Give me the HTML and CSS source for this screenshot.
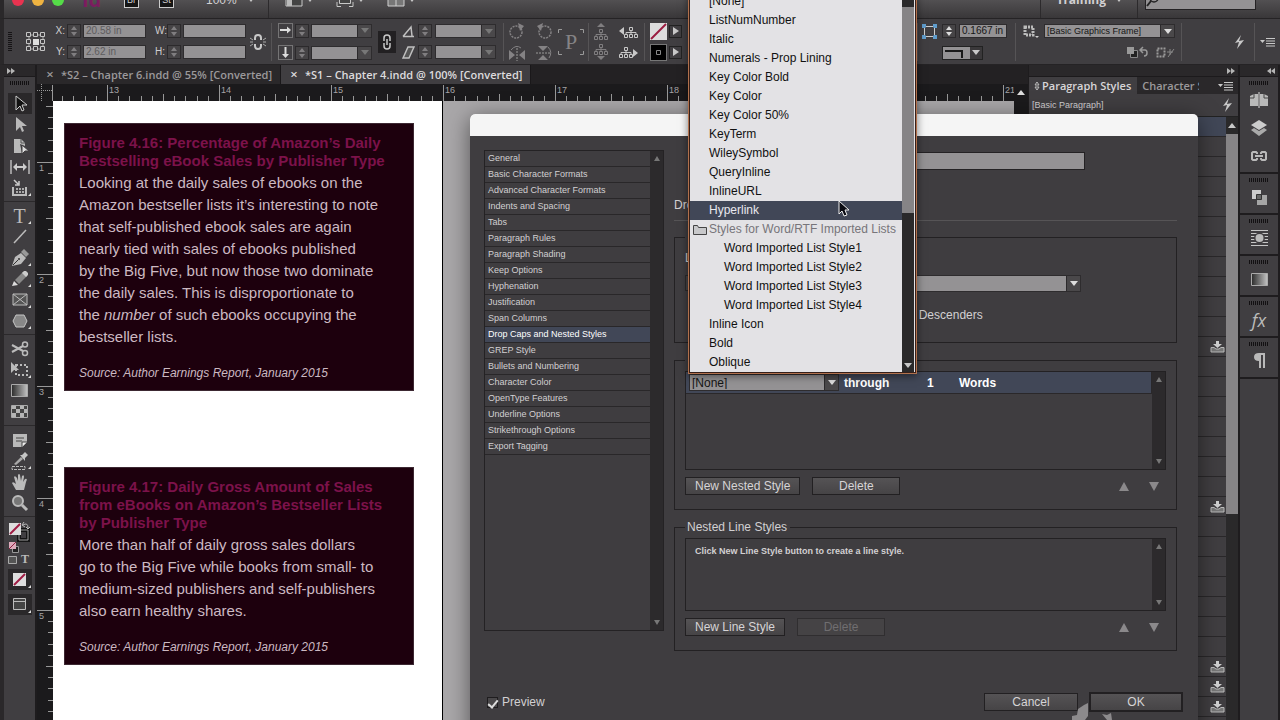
FILE: index.html
```html
<!DOCTYPE html>
<html lang="en">
<head>
<meta charset="utf-8">
<title>S1 - Chapter 4.indd</title>
<link rel="stylesheet" href="styles.css">
</head>
<body>
<svg class="defs" aria-hidden="true">
  <defs>
    <linearGradient id="fade"><stop offset="0" stop-color="#2a2a2a"/><stop offset="1" stop-color="#c4c4c4"/></linearGradient>
    <pattern id="ticks-h" width="112" height="17" patternUnits="userSpaceOnUse" x="54">
      <path d="M.5 1v16M11.5 12v5M22.5 12v5M34.5 12v5M45.5 12v5M56.5 10v7M67.5 12v5M78.5 12v5M90.5 12v5M101.5 12v5" stroke="#989898"/>
    </pattern>
    <pattern id="ticks-v" width="16" height="112" patternUnits="userSpaceOnUse" y="61">
      <path d="M0 .5h16M11 11.5h5M11 22.5h5M11 34.5h5M11 45.5h5M9 56.5h7M11 67.5h5M11 78.5h5M11 90.5h5M11 101.5h5" stroke="#989898"/>
    </pattern>
    <symbol id="bolt" viewBox="0 0 12 16"><path d="M8 1 2 9l4-1-2 7 7-9-5 1z" fill="#c8c8c8"/></symbol>
    <symbol id="flyout" viewBox="0 0 16 10"><path d="M0 3h5L2.500 6z" fill="#c8c8c8"/><path d="M6 1.500h9M6 4h9M6 6.500h9M6 9h9" stroke="#c8c8c8"/></symbol>
    <symbol id="tree" viewBox="0 0 14 12"><path d="M5.500 1.500h3v3h-3zM.5 8.500h3v3h-3zM5.500 8.500h3v3h-3zM10.500 8.500h3v3h-3zM7 5v3M2 8V6.500h10V8" fill="none" stroke="currentColor"/></symbol>
    <symbol id="load" viewBox="0 0 15 12"><path d="M1 6.500h3L6 8h3l2-1.500h3V11H1z" fill="#777" stroke="#bbb"/><path d="M6 0h3v3h3L7.500 7 3 3h3z" fill="#d0d0d0"/></symbol>
    <symbol id="arrows-right" viewBox="0 0 8 6"><path d="M0 0l4 3-4 3zM4 0l4 3-4 3z" fill="#b5b5b5"/></symbol>
    <symbol id="arrows-left" viewBox="0 0 8 6"><path d="M8 0 4 3l4 3zM4 0 0 3l4 3z" fill="#b5b5b5"/></symbol>
  </defs>
</svg>

<div class="app">
  <header class="appbar">
    <span class="light red"></span><span class="light amber"></span><span class="light green"></span>
    <span class="logo">Id</span>
    <button class="square">Br</button><button class="square">St</button>
    <button class="zoom">100%<i class="tri down"></i></button>
    <i class="bar-line"></i>
    <button class="view"><svg width="18" height="14"><path d="M1 1h16v12H1z" fill="#444" stroke="#c8c8c8"/><path d="M2 2h5v11H2z" fill="#bbb"/></svg><i class="tri down"></i></button>
    <button class="view"><svg width="18" height="14"><path d="M3.500 1v9.500h11V1M1 9v4.500h4M17 9v4.500h-4" fill="#444" stroke="#c8c8c8"/></svg><i class="tri down"></i></button>
    <button class="view"><svg width="18" height="14"><path d="M1 1h16v12H1zM9 1v12" fill="#777" stroke="#d0d0d0"/></svg><i class="tri down"></i></button>
    <div class="appbar-end">
      <i class="bar-line"></i>
      <button class="training">Training<i class="tri down"></i></button>
      <i class="bar-line"></i>
      <label class="search"><svg width="14" height="14"><circle cx="8" cy="5" r="4" fill="none" stroke="#222" stroke-width="1.500"/><path d="M5 8l-4 5" stroke="#222" stroke-width="2"/></svg><input aria-label="Search"></label>
    </div>
  </header>

  <div class="control">
    <i class="grip-v"></i>
    <svg class="ref" width="20" height="20"><path d="M3 3h14v14H3z" fill="none" stroke="#aaa"/><g fill="#403e41" stroke="#c5c5c5"><path d="M.5.5h4v4h-4zM7.500.5h4v4h-4zM14.500.5h4v4h-4zM.5 7.500h4v4h-4zM14.500 7.500h4v4h-4zM.5 14.500h4v4h-4zM7.500 14.500h4v4h-4zM14.500 14.500h4v4h-4z"/></g><path d="M7 7h6v6H7z" fill="#ddd"/></svg>
    <div class="fields xy">
      <label for="fx">X:</label><i class="spin"></i><input id="fx" value="20.58 in">
      <label for="fy">Y:</label><i class="spin"></i><input id="fy" value="2.62 in">
    </div>
    <div class="fields wh">
      <label for="fw">W:</label><i class="spin"></i><input id="fw">
      <label for="fh">H:</label><i class="spin"></i><input id="fh">
    </div>
    <svg class="unlink" width="16" height="18"><path d="M5 7V5q0-3 3-3t3 3v2M5 11v2q0 3 3 3t3-3v-2" fill="none" stroke="#c8c8c8" stroke-width="2"/><path d="M0 5l3 2M0 9h3M0 13l3-2M16 5l-3 2M16 9h-3M16 13l-3-2" stroke="#aaa"/></svg>
    <i class="line"></i>
    <div class="fields scale">
      <svg width="15" height="15"><path d="M.5.5h14v14H.5z" fill="none" stroke="#aaa" stroke-dasharray="1 1"/><path d="M2 7h8" stroke="#ddd" stroke-width="2"/><path d="M9 3.500 13 7l-4 3.500z" fill="#ddd"/></svg><i class="spin"></i><span class="combo dim"><input aria-label="Scale X"><i class="tri down"></i></span>
      <svg width="15" height="15"><path d="M.5.5h14v14H.5z" fill="none" stroke="#aaa" stroke-dasharray="1 1"/><path d="M7.500 2v8" stroke="#ddd" stroke-width="2"/><path d="M4 9h7l-3.500 4z" fill="#ddd"/></svg><i class="spin"></i><span class="combo dim"><input aria-label="Scale Y"><i class="tri down"></i></span>
    </div>
    <button class="chain" aria-label="Constrain"><svg width="10" height="16"><path d="M2 7V4q0-3 3-3t3 3v3M2 9v3q0 3 3 3t3-3V9" fill="none" stroke="#c8c8c8" stroke-width="1.500"/><path d="M5 5v6" stroke="#c8c8c8" stroke-width="1.500"/></svg></button>
    <div class="fields angle">
      <svg width="13" height="13"><path d="M1 11.500h11M1 11.500 9 2l1 9" fill="none" stroke="#c0c0c0" stroke-width="1.500"/></svg><i class="spin"></i><span class="combo dim"><input aria-label="Rotation"><i class="tri down"></i></span>
      <svg width="13" height="13"><path d="M1 12h6l5-11H6z" fill="#555" stroke="#c0c0c0" stroke-width="1.500"/></svg><i class="spin"></i><span class="combo dim"><input aria-label="Shear"><i class="tri down"></i></span>
    </div>
    <i class="line"></i>
    <div class="icons rot">
      <svg width="16" height="16"><circle cx="7" cy="9" r="6" fill="none" stroke="#848284" stroke-width="1.500" stroke-dasharray="2 1"/><path d="M9 0l6 3-4 5z" fill="#848284"/></svg>
      <svg width="16" height="16"><circle cx="9" cy="9" r="6" fill="none" stroke="#848284" stroke-width="1.500" stroke-dasharray="2 1"/><path d="M7 0 1 3l4 5z" fill="#848284"/></svg>
      <svg width="16" height="16"><path d="M0 5v10l6-5zM16 5v10l-6-5z" fill="#848284"/><path d="M8 3v13" stroke="#999" stroke-dasharray="2 1"/><path d="M2 5q5-6 10-2" fill="none" stroke="#848284"/></svg>
      <svg width="16" height="16"><path d="M2 1h10L7 6zM2 15h10L7 10z" fill="#848284"/><path d="M0 8h14" stroke="#999" stroke-dasharray="2 1"/><path d="M12 2q5 5 1 11" fill="none" stroke="#848284"/></svg>
    </div>
    <span class="big-p"><svg width="26" height="26"><path d="M.5 4V.5H4M22 .5h3.500V4M25.500 22v3.500H22M4 25.500H.5V22" fill="none" stroke="#999"/></svg>P</span>
    <i class="line"></i>
    <div class="icons trees">
      <svg class="dimmed" width="14" height="17"><path d="M3 4h8L7 0z" fill="currentColor"/><use href="#tree" y="5" width="14" height="12"/></svg>
      <svg width="19" height="14"><path d="M0 6l5-4v8z" fill="currentColor"/><use href="#tree" x="5" y="1" width="14" height="12"/></svg>
      <svg class="dimmed" width="14" height="17"><path d="M3 13h8l-4 4z" fill="currentColor"/><use href="#tree" width="14" height="12"/></svg>
      <svg width="19" height="14"><path d="M19 8l-5-4v8z" fill="currentColor"/><use href="#tree" y="1" width="14" height="12"/></svg>
    </div>
    <i class="line"></i>
    <div class="icons paint">
      <svg width="17" height="17"><path d="M0 0h17v17H0z" fill="#ddd"/><path d="M1 16 16 1" stroke="#9a1c40" stroke-width="2"/></svg><button class="go" aria-label="Fill"><i class="tri right"></i></button>
      <svg width="17" height="17"><path d="M0 0h17v17H0z" fill="#777"/><path d="M1 1h15v15H1z" fill="#000"/><path d="M6.500 6.500h4v4h-4z" fill="none" stroke="#888"/></svg><button class="go" aria-label="Stroke"><i class="tri right"></i></button>
    </div>

    <div class="control-end">
      <i class="line"></i>
      <div class="fields corner">
        <svg width="15" height="15"><path d="M2.500 2.500h10v10h-10z" fill="none" stroke="#ccc"/><path d="M0 0h4v3L3 4H0zM11 0h4v4h-3l-1-1zM0 11h3l1 1v3H0zM11 15v-3l1-1h3v4z" fill="#5f9ccc"/></svg><i class="spin lit"></i><input class="live" aria-label="Corner size" value="0.1667 in">
        <button class="shape" aria-label="Corner shape"><svg width="26" height="11"><path d="M2 4h17v7" fill="none" stroke="#1a1a1a" stroke-width="2"/></svg><i class="tri down"></i></button>
      </div>
      <i class="line"></i>
      <svg class="frame-icon" width="16" height="14"><path d="M2 2h8v8H2z" fill="none" stroke="#bbb" stroke-width="3" stroke-dasharray="2 1"/><path d="M12 11h4l-2 2z" fill="#ccc"/></svg>
      <div class="frame">
        <span class="combo"><select aria-label="Object style"><option>[Basic Graphics Frame]</option></select><i class="tri down"></i></span>
        <div class="frame-tools">
          <svg width="22" height="13"><path d="M4.500 4.500h7v7h-7z" fill="#222" stroke="#888"/><path d="M1 1h7v7H1z" fill="#999"/><path d="M15 4h4q2 0 2 3t-3 3M17 1l-3 3 3 3" fill="none" stroke="#999" stroke-width="1.500"/></svg>
          <svg width="20" height="13"><path d="M2.500 2.500h7v8h-7z" fill="none" stroke="#999" stroke-dasharray="2 1" stroke-width="2"/><path d="M13 11l6-8M12 6h6M15 3v6" stroke="#888"/></svg>
        </div>
      </div>
      <i class="line"></i>
      <svg class="bolt-big" width="12" height="18"><use href="#bolt"/></svg>
      <i class="line"></i>
      <svg class="fly" width="16" height="10"><use href="#flyout"/></svg>
    </div>
  </div>

  <div class="work">
    <aside class="tools">
      <div class="strip"><svg width="8" height="6"><use href="#arrows-right"/></svg></div>
      <i class="grip"></i>
      <div class="tool-group">
        <button class="on" aria-label="Selection"><svg width="18" height="18"><path d="M5 1v14l4-4 2 5 2-1-2-5h5z" fill="#111" stroke="#ccc"/></svg></button>
        <button aria-label="Direct selection"><svg width="18" height="18"><path d="M5 1v14l4-4 2 5 2-1-2-5h5z" fill="#b9b9b9"/></svg></button>
        <button aria-label="Page"><svg width="18" height="18"><path d="M3 2h7l4 4v3l-5-2 2 9H3z" fill="#b9b9b9"/><path d="M10 2v4h4" fill="none" stroke="#555"/><path d="M11 8v9l3-3h4z" fill="#ddd" stroke="#403e41"/></svg></button>
        <button aria-label="Gap"><svg width="20" height="16"><path d="M1 1v14M19 1v14" stroke="#bbb" stroke-width="1.500"/><path d="M5 8h10" stroke="#ccc" stroke-width="2"/><path d="M3 8l4-4v8zM17 8l-4-4v8z" fill="#ccc"/></svg></button>
        <button class="more" aria-label="Content collector"><svg width="18" height="18"><path d="M2 8v8h13V8" fill="none" stroke="#bbb" stroke-width="2"/><path d="M5 9h2v2H5zM8 9h2v2H8zM11 9h2v2h-2zM5 12h2v2H5zM8 12h2v2H8zM11 12h2v2h-2z" fill="#aaa"/><path d="M3 1l4 4M8 2v4H4" fill="none" stroke="#ccc" stroke-width="1.500"/></svg></button>
      </div>
      <div class="tool-group">
        <button class="more type" aria-label="Type">T</button>
        <button aria-label="Line"><svg width="16" height="16"><path d="M2 14 14 1" stroke="#bbb" stroke-width="1.500"/></svg></button>
        <button class="more" aria-label="Pen"><svg width="18" height="18"><path d="M1 17 4 8l6-4 5 5-5 6z" fill="#bbb"/><path d="M10 3l3-3 5 5-3 3z" fill="#999"/><path d="M2 16l5-5" stroke="#333"/><circle cx="8" cy="10" r="1" fill="#333"/></svg></button>
        <button class="more" aria-label="Pencil"><svg width="18" height="18"><path d="M1 16l2-5 4 4z" fill="#ddd"/><path d="M4 10l8-8 4 4-8 8z" fill="#888"/><path d="M11 3l2-2h2l2 2v2l-2 2z" fill="#ccc"/></svg></button>
        <button class="more" aria-label="Frame"><svg width="16" height="14"><path d="M1 1h14v11H1zM1 1l14 11M15 1 1 12" fill="#555" stroke="#bbb"/></svg></button>
        <button class="more" aria-label="Polygon"><svg width="16" height="16"><path d="M4 2h8l3 6-3 6H4L1 8z" fill="#888" stroke="#c5c5c5"/></svg></button>
      </div>
      <div class="tool-group">
        <button aria-label="Scissors"><svg width="18" height="16"><path d="M1 4l11 6M1 11l11-6" stroke="#bbb" stroke-width="2"/><circle cx="14" cy="3.500" r="2.500" fill="none" stroke="#bbb" stroke-width="1.500"/><circle cx="14" cy="12" r="2.500" fill="none" stroke="#bbb" stroke-width="1.500"/></svg></button>
        <button class="more" aria-label="Free transform"><svg width="20" height="16"><path d="M6 3h11v10H6z" fill="none" stroke="#bbb" stroke-width="2" stroke-dasharray="2 2"/><path d="M1 0v11l3-3h5z" fill="#bbb"/></svg></button>
        <button aria-label="Gradient"><svg width="17" height="13"><path d="M.5.5h16v12H.5z" fill="url(#fade)" stroke="#aaa"/></svg></button>
        <button aria-label="Gradient feather"><svg width="17" height="13"><path d="M.5.5h16v12H.5z" fill="#444" stroke="#aaa"/><path d="M1 1h4v3H1zM9 1h4v3H9zM5 4h4v4H5zM13 4h3v4h-3zM1 8h4v4H1zM9 8h4v4H9z" fill="#b5b5b5"/></svg></button>
      </div>
      <div class="tool-group">
        <button aria-label="Note"><svg width="16" height="16"><path d="M1 2h14v8l-5 5H1z" fill="#b9b9b9"/><path d="M4 6h8M4 9h6" stroke="#444"/><path d="M10 15v-5h5" fill="#eee" stroke="#444"/></svg></button>
        <button class="more" aria-label="Eyedropper"><svg width="18" height="18"><path d="M3 12l7-7 2 2-7 6z" fill="#aaa"/><path d="M9 3l2 0 3-3 3 3-3 3v3z" fill="#c5c5c5"/><path d="M1 14.500h13v3H1z" fill="none" stroke="#bbb" stroke-dasharray="3 1"/></svg></button>
        <button aria-label="Hand"><svg width="18" height="18"><path d="M5 17 1 10q1-2 4 1L3 4q1-2 3 1l1 3V2q1-2 2 0l1 6 1-5q2-2 2 1l-1 5 2-3q3-1 1 3l-2 8z" fill="#bbb"/></svg></button>
        <button aria-label="Zoom"><svg width="18" height="18"><circle cx="7" cy="7" r="5" fill="#777" stroke="#bbb" stroke-width="2"/><path d="M11 11l5 5" stroke="#bbb" stroke-width="3"/></svg></button>
      </div>
      <div class="colours">
        <svg width="24" height="46"><path d="M11 9h9v10h-9z" fill="none" stroke="#151515" stroke-width="4"/><path d="M11 9h9v10h-9z" fill="none" stroke="#999" stroke-width="1"/><path d="M1 2h12v12H1z" fill="#ddd"/><path d="M2 13 12 3" stroke="#a01c44" stroke-width="2"/><path d="M15 4q5-3 5 3M16 1l-2 3 3 2M18 6l2 2 2-2" stroke="#bbb" fill="none"/><path d="M4.500 25.500h6v6h-6z" fill="#222" stroke="#999"/><path d="M1 21h7v7H1z" fill="#ddaabb"/><path d="M1 28l7-7" stroke="#902040"/><path d="M.5 35.500h8v7h-8z" fill="#555" stroke="#aaa"/></svg>
        <span class="t-mini">T</span>
      </div>
      <div class="tool-group last">
        <button class="on more" aria-label="Apply none"><svg width="13" height="13"><path d="M0 0h13v13H0z" fill="#ddd"/><path d="M1 12 12 1" stroke="#a01c44" stroke-width="2"/></svg></button>
        <button class="on more" aria-label="Screen mode"><svg width="13" height="13"><path d="M.5.5h12v11H.5zM1 3.500h11" fill="#444" stroke="#bbb"/></svg></button>
      </div>
    </aside>

    <main class="doc">
      <nav class="tabs">
        <button><i>×</i>*S2 – Chapter 6.indd @ 55% [Converted]</button>
        <button class="current"><i>×</i>*S1 – Chapter 4.indd @ 100% [Converted]</button>
      </nav>
      <div class="grid">
        <svg class="origin" width="16" height="17"><path d="M0 6.500h16M4.500 0v17" stroke="#999" stroke-dasharray="1 1"/><path d="M15.500 1v16" stroke="#999"/></svg>
        <div class="ruler-h"><svg width="100%" height="17"><rect width="100%" height="17" fill="url(#ticks-h)"/></svg>
          <span>13</span><span>14</span><span>15</span><span>16</span><span>17</span><span>18</span><span>19</span><span>20</span><span>21</span></div>
        <div class="scroll-top"><i class="tri up"></i></div>
        <div class="ruler-v"><svg width="16" height="100%"><rect width="16" height="100%" fill="url(#ticks-v)"/></svg>
          <span>1</span><span>2</span><span>3</span><span>4</span><span>5</span></div>
        <div class="canvas">
          <div class="page">
            <article class="box">
              <h2>Figure 4.16: Percentage of Amazon’s Daily<br>Bestselling eBook Sales by Publisher Type</h2>
              <p>Looking at the daily sales of ebooks on the<br>Amazon bestseller lists it’s interesting to note<br>that self-published ebook sales are again<br>nearly tied with sales of ebooks published<br>by the Big Five, but now those two dominate<br>the daily sales. This is disproportionate to<br>the <em>number</em> of such ebooks occupying the<br>bestseller lists.</p>
              <cite>Source: Author Earnings Report, January 2015</cite>
            </article>
            <article class="box">
              <h2>Figure 4.17: Daily Gross Amount of Sales<br>from eBooks on Amazon’s Bestseller Lists<br>by Publisher Type</h2>
              <p>More than half of daily gross sales dollars<br>go to the Big Five while books from small- to<br>medium-sized publishers and self-publishers<br>also earn healthy shares.</p>
              <cite>Source: Author Earnings Report, January 2015</cite>
            </article>
          </div>
        </div>
        <div class="scroll-side"></div>
      </div>
    </main>

    <aside class="panel">
      <div class="strip end"><svg width="8" height="6"><use href="#arrows-right"/></svg></div>
      <div class="panel-tabs">
        <button class="current"><svg width="6" height="10"><path d="M1 4l2-3 2 3zM1 6l2 3 2-3z" fill="none" stroke="#bbb"/></svg>Paragraph Styles</button>
        <button class="clip">Character Styles</button>
        <svg class="fly" width="16" height="10"><use href="#flyout"/></svg>
      </div>
      <div class="basic"><span>[Basic Paragraph]</span><svg width="12" height="16"><use href="#bolt"/></svg></div>
      <div class="styles">
        <ul>
          <li class="sel"></li><li></li><li></li><li></li><li></li><li></li><li></li><li></li><li></li><li></li><li></li>
          <li><svg width="15" height="12"><use href="#load"/></svg></li><li></li><li></li><li></li><li></li><li></li><li></li><li></li>
          <li><svg width="15" height="12"><use href="#load"/></svg></li><li></li><li></li><li></li><li></li><li></li><li></li><li></li>
          <li><svg width="15" height="12"><use href="#load"/></svg></li><li><svg width="15" height="12"><use href="#load"/></svg></li><li><svg width="15" height="12"><use href="#load"/></svg></li><li></li>
        </ul>
        <div class="bar"><div class="bar-btn"><i class="tri up"></i></div><div class="thumb"></div></div>
      </div>
    </aside>

    <aside class="dock">
      <div class="strip end"><svg width="8" height="6"><use href="#arrows-left"/></svg></div>
      <div class="dock-group"><i class="grip"></i>
        <button aria-label="Pages"><svg width="18" height="16"><path d="M0 4l4-2h4v12H0zM18 4l-4-2h-4v12h8z" fill="#b9b9b9"/><path d="M9 0v16" stroke="#ddd"/><path d="M4 2v4H0M14 2v4h4" fill="none" stroke="#444"/></svg></button>
        <button aria-label="Layers"><svg width="18" height="18"><path d="M9 1l8 5-8 5-8-5z" fill="#ccc"/><path d="M1 11l3-2 5 3 5-3 3 2-8 6z" fill="#aaa"/></svg></button>
        <button aria-label="Links"><svg width="18" height="12"><path d="M7 4V3L6 2H3L2 3v6l1 1h3l1-1V8M11 4V3l1-1h3l1 1v6l-1 1h-3l-1-1V8" fill="none" stroke="#b9b9b9" stroke-width="2"/><path d="M5 6h8" stroke="#b9b9b9" stroke-width="2"/></svg></button>
      </div>
      <div class="dock-group"><i class="grip"></i><button aria-label="Pathfinder"><svg width="16" height="16"><path d="M1 1h9v9H1z" fill="#ccc"/><path d="M6 6h10v10H6z" fill="#a5a5a5"/><path d="M5.500 5.500h5v5h-5z" fill="#666" stroke="#333"/></svg></button></div>
      <div class="dock-group"><i class="grip"></i><button aria-label="Text wrap"><svg width="17" height="16"><path d="M0 .5h17M0 3.500h17M0 6.500h17M0 9.500h17M0 12.500h17M0 15.500h17" stroke="#c5c5c5"/><circle cx="8.500" cy="8" r="5.500" fill="#403e41"/><circle cx="8.500" cy="8" r="4" fill="#bbb"/></svg></button></div>
      <div class="dock-group"><i class="grip"></i><button aria-label="Gradient"><svg width="17" height="13"><path d="M.5.5h16v12H.5z" fill="url(#fade)" stroke="#aaa"/></svg></button></div>
      <div class="dock-group"><i class="grip"></i><button class="fx" aria-label="Effects">fx</button></div>
      <div class="dock-group"><i class="grip"></i><button aria-label="Paragraph"><svg width="13" height="16"><path d="M6 0h6v15h-2V2H8v13H6V8Q1 8 1 4t5-4z" fill="#b9b9b9"/></svg></button></div>
      <div class="dock-fill"></div>
    </aside>
  </div>

  <section class="dialog" role="dialog" aria-label="Paragraph Style Options">
    <div class="title"></div>
    <div class="dialog-body">
      <div class="side">
        <ul>
          <li>General</li><li>Basic Character Formats</li><li>Advanced Character Formats</li><li>Indents and Spacing</li><li>Tabs</li><li>Paragraph Rules</li><li>Paragraph Shading</li><li>Keep Options</li><li>Hyphenation</li><li>Justification</li><li>Span Columns</li><li class="sel">Drop Caps and Nested Styles</li><li>GREP Style</li><li>Bullets and Numbering</li><li>Character Color</li><li>OpenType Features</li><li>Underline Options</li><li>Strikethrough Options</li><li>Export Tagging</li>
        </ul>
        <div class="track"><i class="tri up"></i><i class="tri down"></i></div>
      </div>
      <form class="options">
        <div class="name"><input aria-label="Style Name"></div>
        <h3>Drop Caps</h3>
        <fieldset class="caps">
          <legend></legend>
          <div class="lines"><label for="ln">Lines</label></div>
          <div class="caps-row"><i class="spin"></i><input id="ln"><span class="combo"><select aria-label="Character Style"><option></option></select><i class="tri down"></i></span></div>
          <label class="desc"><input type="checkbox">Scale for Descenders</label>
        </fieldset>
        <fieldset>
          <legend></legend>
          <div class="list tall">
            <div class="rows"><div class="nested"><span class="combo"><select aria-label="Nested style"><option>[None]</option></select><i class="tri down"></i></span><b>through</b><b>1</b><b>Words</b></div></div>
            <div class="track"><i class="tri up"></i><i class="tri down"></i></div>
          </div>
          <div class="actions"><button type="button" class="btn">New Nested Style</button><button type="button" class="btn del">Delete</button><span class="move"><i class="tri up"></i><i class="tri down"></i></span></div>
        </fieldset>
        <fieldset>
          <legend>Nested Line Styles</legend>
          <div class="list">
            <div class="rows hint">Click New Line Style button to create a line style.</div>
            <div class="track"><i class="tri up"></i><i class="tri down"></i></div>
          </div>
          <div class="actions"><button type="button" class="btn">New Line Style</button><button type="button" class="btn del" disabled>Delete</button><span class="move"><i class="tri up"></i><i class="tri down"></i></span></div>
        </fieldset>
      </form>
    </div>
    <footer>
      <label class="preview"><input type="checkbox" checked>Preview</label>
      <button class="btn">Cancel</button><button class="btn ok">OK</button>
    </footer>
    <svg class="mark" width="44" height="17" aria-hidden="true"><path d="M0 17v-4l5-1 1-6 6-4 4-2v13l-3 4zM30 11l5 1 4-2 1 7h-5z" fill="#8c8a8c"/></svg>

    <div class="menu">
      <ul role="listbox" aria-label="Character styles">
        <li>[None]</li><li>ListNumNumber</li><li>Italic</li><li>Numerals - Prop Lining</li><li>Key Color Bold</li><li>Key Color</li><li>Key Color 50%</li><li>KeyTerm</li><li>WileySymbol</li><li>QueryInline</li><li>InlineURL</li><li class="sel">Hyperlink</li>
        <li class="folder"><svg width="14" height="12"><path d="M.5 10.500v-9h4l1 2h8v7z" fill="#c8c8ca" stroke="#444"/></svg>Styles for Word/RTF Imported Lists</li>
        <li class="sub">Word Imported List Style1</li><li class="sub">Word Imported List Style2</li><li class="sub">Word Imported List Style3</li><li class="sub">Word Imported List Style4</li>
        <li>Inline Icon</li><li>Bold</li><li>Oblique</li>
      </ul>
      <div class="menu-bar"><div class="thumb"></div><i class="tri down"></i></div>
      <svg class="pointer" width="12" height="18"><path d="M1 1v13l3-3 2 5 3-1-2-5h4z" fill="#0b0b12" stroke="#eee"/></svg>
    </div>
  </section>
</div>
</body>
</html>
```
FILE: styles.css
```css
* { box-sizing: border-box; }
body { margin: 0; background: #2b292b; color: #d2d0d2; font: 12px/16px "Liberation Sans", sans-serif; }
button, input, select { font: inherit; color: inherit; border: 0; padding: 0; margin: 0; border-radius: 0; background: none; min-width: 0; }
select { appearance: none; }
ul { list-style: none; margin: 0; padding: 0; }
svg { display: block; flex: none; }
.defs { position: absolute; width: 0; height: 0; }
.app { position: relative; height: 100vh; display: flex; flex-direction: column; overflow: hidden; }

.tri { display: block; flex: none; width: 0; height: 0; border: 4px solid transparent; color: #c8c8c8; }
.tri.down { border-top: 5px solid; border-bottom: 0; }
.tri.up { border-bottom: 5px solid; border-top: 0; }
.tri.right { border-left: 6px solid; border-right: 0; }
.down, .up { border-left-color: transparent !important; border-right-color: transparent !important; }
.tri.right { border-top-color: transparent; border-bottom-color: transparent; }

.appbar { flex: none; height: 36px; margin-top: -18px; display: flex; align-items: center; background: linear-gradient(#525052 50%, #393739); border-left: 4px solid #2a282a; padding-left: 8px; }
.light { width: 12px; height: 12px; border-radius: 50%; margin-right: 8px; }
.red { background: #e83350; } .amber { background: #efb341; } .green { background: #55dc48; }
.logo { color: #7c1c60; font: bold 20px/24px "Open Sans", sans-serif; width: 30px; margin: 0 12px 0 10px; }
.square { width: 15px; height: 15px; margin-right: 20px; background: #151515; border: 1px solid #ccc; font-size: 9px; line-height: 12px; text-align: center; }
.zoom, .view, .training { display: flex; align-items: center; }
.zoom { margin-left: 12px; gap: 11px; } .zoom .tri, .view .tri, .training .tri { border-width: 4px 3px 0; }
.bar-line { width: 1px; height: 36px; background: #2c2a2c; }
.zoom + .bar-line { margin: 0 16px 0 14px; }
.view { gap: 4px; margin-right: 23px; }
.appbar-end { margin-left: auto; display: flex; align-items: center; padding-right: 24px; }
.training { font: bold 12px/16px "Open Sans", sans-serif; gap: 10px; margin: 0 15px; }
.search { display: flex; align-items: center; height: 19px; margin-left: 7px; border: 1px solid #242224; background: #949294; width: 111px; }
.search input { flex: 1; }

.control { flex: none; height: 47px; display: flex; align-items: center; background: #403e41; border-top: 1px solid #252325; border-bottom: 1px solid #252325; border-left: 4px solid #2a282a; padding: 0 4px 0 4px; }
.grip-v { width: 4px; height: 20px; background: repeating-linear-gradient(#161416 0 1px, #403e41 1px 2px); margin-right: 14px; }
.ref { margin-right: 8px; }
.line { width: 1px; height: 38px; background: #565456; flex: none; }
.fields { display: grid; gap: 7px 2px; align-items: center; grid-template-columns: 11px 14px 63px; font-size: 10px; line-height: 14px; }
.fields label { text-align: right; color: #cfcdcf; }
.fields input, .combo { height: 14px; background: #949294; color: #5e5c5e; border: 1px solid #2e2c2e; }
.fields > input { padding-left: 2px; width: 100%; }
.fields input.live { color: #161616; }
.wh { margin: 0 4px 0 9px; grid-template-columns: 10px 14px 63px; }
.spin { position: relative; display: block; width: 14px; height: 14px; background: #464446; border: 1px solid #2c2a2c; }
.spin::before, .spin::after { content: ""; position: absolute; left: 3px; border: 3px solid transparent; }
.spin::before { top: 1px; border-bottom: 4px solid #807e80; border-top: 0; }
.spin::after { bottom: 1px; border-top: 4px solid #807e80; border-bottom: 0; }
.spin.lit::before { border-bottom-color: #ddd; } .spin.lit::after { border-top-color: #ddd; }
.unlink { margin-right: 5px; }
.combo { display: flex; align-items: center; color: #151515; }
.combo > :first-child { flex: 1; height: 100%; border: 0; padding-left: 2px; line-height: 12px; }
.combo .tri { border-top-color: #ddd; box-sizing: content-box; }
.combo { background: linear-gradient(to right, transparent calc(100% - 14px), #2c2a2c calc(100% - 14px), #2c2a2c calc(100% - 13px), #4a484a calc(100% - 13px)), #949294; padding-right: 2px; }
.combo > :first-child { margin-right: 3px; background: none; }
.dim .tri { border-top-color: #777; }
.scale { margin: 0 6px 0 6px; grid-template-columns: 15px 14px 61px; }
.angle { margin: 0 7px 0 6px; grid-template-columns: 13px 14px 61px; column-gap: 3px; }
.chain { width: 18px; height: 22px; background: #222022; display: grid; place-items: center; }
.icons { display: grid; grid-template-columns: auto auto; gap: 6px 11px; align-items: center; justify-items: center; }
.rot { margin-left: 5px; }
.big-p { position: relative; width: 26px; height: 26px; margin: 0 4px 0 6px; text-align: center; font: 22px/26px "Liberation Serif", serif; color: #858385; }
.big-p svg { position: absolute; inset: 0; }
.trees { margin: 0 6px 0 5px; color: #c8c8c8; row-gap: 3px; }
.dimmed { color: #807e80; }
.paint { gap: 4px 2px; margin-left: 5px; }
.go { width: 13px; height: 13px; display: grid; place-items: center; border: 1px solid #222; }
.control-end { margin-left: auto; display: flex; align-items: center; }
.corner { margin: 0 8px 0 4px; grid-template-columns: 17px 14px 48px; column-gap: 3px; }
.shape { grid-column: 2 / 4; width: 41px; height: 14px; display: flex; align-items: center; justify-content: space-between; padding-right: 2px; background: linear-gradient(to right, #949294 27px, #3a383a 27px); border: 1px solid #222; }
.frame-icon { margin: 0 5px 20px 7px; }
.frame { width: 131px; margin-right: 6px; font-size: 9px; }
.frame-tools { display: flex; gap: 7px; justify-content: flex-end; margin-top: 8px; }
.bolt-big { margin: 0 9px 0 51px; }
.control-end > .fly { margin-left: 5px; }

.work { flex: 1; min-height: 0; display: flex; border-left: 4px solid #2a282a; background: #1e1c1e; padding-right: 2px; }
.strip { flex: none; height: 12px; display: flex; align-items: center; padding: 0 3px; background: #2a282a; border-bottom: 1px solid #1c1a1c; }
.end { justify-content: flex-end; }
.grip { display: block; flex: none; width: 20px; height: 4px; margin: 4px auto; background: repeating-linear-gradient(to right, #121012 0 1px, #403e41 1px 2px); }

.tools { flex: none; width: 31px; margin-right: 2px; background: #403e41; display: flex; flex-direction: column; }
.tools > .grip { margin-bottom: 8px; }
.tool-group { display: grid; justify-items: center; padding-bottom: 3px; margin-bottom: 3px; border-bottom: 1px solid #2b292b; }
.tool-group button { position: relative; width: 24px; height: 21px; display: grid; place-items: center; }
.tool-group .on { background: #2a282a; }
.more::after { content: ""; position: absolute; right: 1px; bottom: 2px; border-left: 3px solid transparent; border-bottom: 3px solid #ddd; }
.tool-group .type { font: 20px/20px "Liberation Serif", serif; color: #bbb; }
.colours { position: relative; padding: 1px 0 0 4px; height: 49px; }
.t-mini { position: absolute; left: 17px; bottom: 3px; font: bold 12px/14px "Liberation Serif", serif; color: #bbb; }
.last { gap: 4px; border: 0; }

.doc { flex: 1; min-width: 0; display: flex; flex-direction: column; }
.tabs { flex: none; height: 19px; display: flex; background: #232123; color: #9b999b; }
.tabs button { display: flex; padding: 0 8px 0 9px; font: 600 11px/19px "Open Sans", sans-serif; gap: 7px; background: #2a282a; border-right: 1px solid #1a181a; white-space: nowrap; }
.tabs .current { background: #403e41; color: #dddbdd; }
.tabs i { font-style: normal; font-size: 13px; width: 8px; }
.grid { flex: 1; min-height: 0; display: grid; grid-template: 17px 1fr / 16px 1fr 14px; background: #1b1a1c; }
.ruler-h, .ruler-v { position: relative; display: flex; overflow: hidden; font-size: 9px; line-height: 13px; color: #a5a3a5; }
.ruler-h svg, .ruler-v svg { position: absolute; inset: 0; }
.ruler-h { padding-left: 54px; } .ruler-h span { flex: none; width: 112px; padding-left: 2px; }
.ruler-h span:last-child { width: auto; }
.ruler-v { flex-direction: column; padding-top: 61px; } .ruler-v span { flex: none; height: 112px; padding-left: 2px; }
.scroll-top { display: grid; place-items: center; } .scroll-top .tri { color: #ddd; }
.canvas { background: #a9a7a9; min-width: 0; overflow: hidden; }
.page { width: 390px; height: 100%; background: #fff; border-right: 1px solid #000; padding: 22px 0 0 11px; }
.box { width: 350px; background: #1d000d; border: 1px solid #3c2832; padding: 10px 14px 6px; margin-bottom: 76px; white-space: nowrap; color: #ccb9c2; font-size: 15px; line-height: 22px; }
.box h2 { margin: 0; font-size: 15px; line-height: 18px; color: #7c124a; }
.box p { margin: 2px 0 14px; }
.box cite { display: block; font-size: 12px; line-height: 22px; }

.panel { flex: none; width: 209px; margin: 0 2px 0 1px; background: #403e41; display: flex; flex-direction: column; }
.panel-tabs { flex: none; height: 17px; display: flex; align-items: center; background: #2a282a; }
.panel-tabs button { height: 17px; font: 600 11px/17px "Open Sans", sans-serif; color: #9b999b; white-space: nowrap; }
.panel-tabs .current { display: flex; align-items: center; gap: 2px; padding: 0 6px 0 5px; background: #403e41; color: #d8d6d8; }
.panel-tabs .clip { width: 62px; padding-left: 5px; overflow: hidden; text-align: left; }
.panel-tabs .fly { margin: 0 4px 0 auto; }
.basic { flex: none; height: 23px; display: flex; align-items: center; justify-content: space-between; padding: 0 5px 0 3px; font-size: 9px; border-bottom: 1px solid #222; }
.styles { flex: 1; min-height: 0; display: flex; overflow: hidden; }
.styles ul { flex: 1; }
.styles li { height: 20px; border-bottom: 1px solid #2a282a; display: flex; justify-content: flex-end; align-items: center; padding-right: 1px; }
.sel { background: #414757; }
.bar { width: 12px; background: #2a292a; }
.bar-btn { height: 17px; display: grid; place-items: center; }
.bar .thumb { height: 380px; background: #868486; }

.dock { flex: none; width: 38px; display: flex; flex-direction: column; background: #1e1c1e; }
.dock-group { display: grid; justify-items: center; padding-bottom: 2px; margin-bottom: 2px; background: #403e41; }
.dock-group button { width: 28px; height: 28px; display: grid; place-items: center; }
.dock-group .grip { margin: 4px auto 1px; }
.dock .fx { font: italic 18px/24px "Open Sans", sans-serif; color: #bbb; display: block; text-align: center; }
.dock-fill { flex: 1; background: #403e41; }

.dialog { position: absolute; left: 470px; top: 114px; width: 728px; min-height: 640px; background: #3f3d40; border-radius: 5px 5px 0 0; box-shadow: 0 4px 22px rgba(0, 0, 0, .5); }
.title { height: 22px; background: #f5f5f5; border-radius: 5px 5px 0 0; }
.dialog-body { display: grid; grid-template-columns: 180px 1fr; gap: 10px; padding: 14px 21px 0 14px; }
.side { display: flex; margin-bottom: 20px; border: 1px solid #242224; font-size: 9px; }
.side ul { flex: 1; }
.side li { height: 16px; line-height: 15px; padding-left: 3px; border-bottom: 1px solid #292729; white-space: nowrap; }
.side .sel { color: #fff; }
.track { width: 13px; background: #2c2a2c; display: flex; flex-direction: column; align-items: center; justify-content: space-between; padding: 5px 0; }
.track .tri { color: #777; border-width: 0 3px 5px; } .track .tri.down { border-width: 5px 3px 0; }
.name { display: flex; padding: 2px 92px 0 90px; }
.name input { flex: 1; height: 18px; background: #949294; border: 1px solid #242224; }
.options h3 { margin: 26px 0 9px; height: 25px; border-bottom: 1px solid #565456; font-size: 12px; font-weight: normal; line-height: 18px; }
fieldset { min-width: 0; margin: 0 0 10px; padding: 4px 10px 14px; border: 1px solid #232123; }
fieldset:last-child { margin-bottom: 0; }
legend { height: 14px; line-height: 14px; padding: 0 3px 0 2px; }
fieldset.caps { padding-bottom: 19px; }
.lines { line-height: 14px; padding-top: 3px; }
.caps-row { display: flex; gap: 4px; padding: 10px 85px 0 0; }
.caps-row .spin { height: 16px; } .caps-row input { width: 40px; background: #949294; }
.caps-row .combo, .nested .combo { height: 17px; }
.caps-row .combo { flex: 1; margin-left: 60px; }
.desc { display: flex; align-items: center; gap: 4px; margin-top: 15px; padding-left: 168px; white-space: nowrap; }
.list { height: 73px; display: flex; border: 1px solid #232123; }
.tall { height: 99px; }
.rows { flex: 1; min-width: 0; }
.nested { display: grid; grid-template-columns: 150px 83px 32px 1fr; height: 22px; padding: 0 0 0 3px; align-items: center; background: #414757; border-bottom: 1px solid #2a282a; border-right: 1px solid #2a282a; color: #fff; }
.nested .combo { width: 150px; }
.nested b { padding-left: 5px; }
.hint { padding: 5px 9px; font-weight: bold; font-size: 9px; line-height: 14px; }
.actions { display: flex; gap: 12px; margin-top: 7px; align-items: center; }
.btn { height: 18px; padding: 0 9px; line-height: 16px; background: linear-gradient(#555355, #464446); border: 1px solid #222022; color: #d6d4d6; white-space: nowrap; }
.del { width: 88px; }
.btn:disabled { color: #706e70; border-color: #302e30; background: #454345; }
.move { margin-left: auto; display: flex; gap: 20px; margin-right: 7px; }
.move .tri { color: #8b898b; border-width: 0 5px 9px; } .move .tri.down { border-width: 9px 5px 0; }
footer { display: flex; gap: 11px; align-items: center; padding: 41px 15px 0 17px; }
footer .btn { width: 94px; } footer .ok { border-width: 2px; height: 20px; }
.preview { display: flex; align-items: center; gap: 4px; margin-right: auto; }
.preview input, .desc input { appearance: none; width: 11px; height: 11px; border: 1px solid #1f1d1f; background: #4a484a; display: grid; place-items: center; }
.preview input:checked::before { content: ""; width: 4px; height: 8px; border: solid #ddd; border-width: 0 2px 2px 0; transform: rotate(40deg); }
.mark { position: absolute; left: 602px; top: 589px; }

.menu { position: absolute; left: 218px; top: -123px; width: 229px; display: flex; background: #e3e2e5; color: #111; border: 1px solid #b0704c; box-shadow: 0 2px 8px rgba(0, 0, 0, .5), inset 0 0 0 1px #36201a; padding: 0 2px 1px 1px; }
.menu ul { flex: 1; }
.menu li { height: 19px; line-height: 19px; padding-left: 19px; white-space: nowrap; }
.menu .sub { padding-left: 34px; }
.menu .sel { color: #e8e8ee; }
.menu .folder { display: flex; align-items: center; gap: 2px; padding-left: 3px; color: #77757a; }
.menu-bar { width: 12px; background: #2a292a; padding-top: 15px; display: flex; flex-direction: column; justify-content: space-between; align-items: center; padding-bottom: 4px; }
.menu-bar .thumb { width: 12px; height: 206px; background: #868486; }
.pointer { position: absolute; left: 149px; top: 208px; }
```
